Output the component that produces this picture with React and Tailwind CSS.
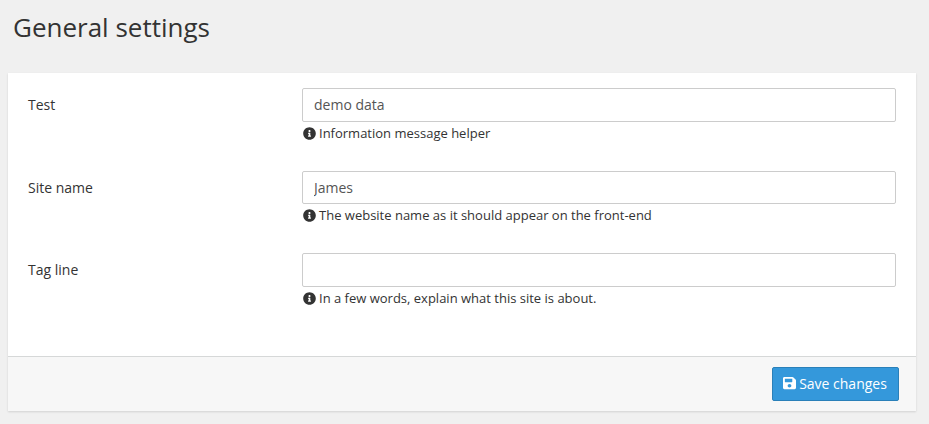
import { FaInfoCircle, FaSave } from "react-icons/fa";

const fields = [
  { label: "Test", value: "demo data", help: "Information message helper", row: "h-[83px]", box: "h-[34px] pb-px" },
  { label: "Site name", value: "James", help: "The website name as it should appear on the front-end", row: "h-[82px]", box: "h-[33px]" },
  { label: "Tag line", value: "", help: "In a few words, explain what this site is about.", row: "h-[103px]", box: "h-[34px]" },
];

function Field({ label, value, help, row, box }) {
  return (
    <div className={`flex ${row}`}>
      <label className="w-[274px] pt-[7px] leading-5">{label}</label>
      <div className="w-[594px]">
        <input
          type="text"
          defaultValue={value}
          className={`block w-full rounded-[2px] border border-[#ccc] bg-white px-[11px] text-[14px] text-[#555] outline-none ${box}`}
        />
        <p className="flex items-center pt-[2px] pl-px text-[13px] leading-[19px] text-[#333]">
          <FaInfoCircle className="mr-[3px] mb-px size-[13px]" />
          {help}
        </p>
      </div>
    </div>
  );
}

export default function App() {
  return (
    <main className="h-[424px] overflow-hidden bg-[#f0f0f0] pr-[13px] pl-[8px] font-['Open_Sans',sans-serif] text-[14px] text-[#333]">
      <h1 className="h-[73px] pt-[10px] pl-[5px] text-[26px] leading-[34px]">General settings</h1>
      <form className="bg-white shadow-[0_1px_2px_rgba(0,0,0,0.13)]">
        <div className="h-[283px] px-5 pt-[15px]">
          {fields.map((field) => (
            <Field key={field.label} {...field} />
          ))}
        </div>
        <div className="flex h-[55px] justify-end border-t border-[#d6d8d8] bg-[#f7f7f7] pt-[10px] pr-[17px]">
          <button
            type="button"
            className="flex h-[34px] w-[127px] items-center justify-center rounded-[2px] border border-[#2a80b9] bg-[#3498db] pr-px pb-[2px] text-white"
          >
            <FaSave className="mr-[3px] size-[14px] w-[13px]" preserveAspectRatio="none" />
            Save changes
          </button>
        </div>
      </form>
    </main>
  );
}
